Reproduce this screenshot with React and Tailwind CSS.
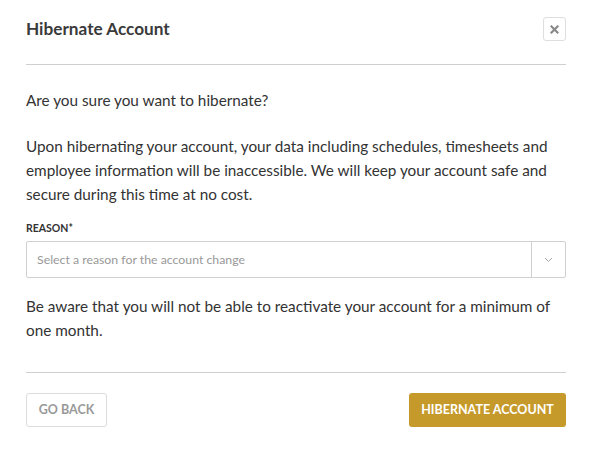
import React from 'react';

const ChevronDown = () => (
    <svg width="9" height="6" viewBox="0 0 9 6" fill="none">
        <path d="M1 1l3.5 3.5L8 1" stroke="#a8a8a8" strokeWidth="1" />
    </svg>
);

const CloseIcon = () => (
    <svg width="9" height="9" viewBox="0 0 9 9" fill="none">
        <path d="M1.5 1.5l6 6M7.5 1.5l-6 6" stroke="#8a8a8a" strokeWidth="2.2" strokeLinecap="square" />
    </svg>
);

const App = () => {
    return (
        <div className="w-[593px] h-[456px] bg-white pl-[26px] pr-[27px] text-[#333] font-['Lato','Liberation_Sans',sans-serif]">
            <div className="flex items-center justify-between pt-[17px] pb-[23px] border-b border-[#cfcfcf]">
                <h2 className="text-[17.2px] font-bold leading-[24px] text-[#3a3a3a]">Hibernate Account</h2>
                <button className="w-[23px] h-[24px] flex items-center justify-center border border-[#dedede] rounded-[3px] bg-white">
                    <CloseIcon />
                </button>
            </div>

            <div className="pt-[23px] text-[15.3px] leading-[24px]">
                <p>Are you sure you want to hibernate?</p>
                <p className="mt-[22px]">
                    Upon hibernating your account, your data including schedules, timesheets and employee information will be inaccessible. We will keep your account safe and secure during this time at no cost.
                </p>

                <label className="block mt-[14px] text-[10.5px] font-bold leading-[16px] text-[#333]">REASON*</label>
                <div className="mt-[5px] flex h-[37px] border border-[#d0d0d0] rounded-[2px]">
                    <div className="flex-1 flex items-center px-[10px] text-[12.3px] text-[#999]">
                        Select a reason for the account change
                    </div>
                    <div className="w-[34px] flex items-center justify-center border-l border-[#d0d0d0]">
                        <ChevronDown />
                    </div>
                </div>

                <p className="mt-[16px] pb-[30px] border-b border-[#cfcfcf]">
                    Be aware that you will not be able to reactivate your account for a minimum of one month.
                </p>
            </div>

            <div className="flex items-center justify-between pt-[20px]">
                <button className="h-[34px] w-[81px] border border-[#dcdcdc] rounded-[3px] text-[12.5px] font-bold text-[#999]">
                    GO BACK
                </button>
                <button className="h-[34px] w-[157px] rounded-[3px] bg-[#c69a2a] text-[12.5px] font-bold text-white">
                    HIBERNATE ACCOUNT
                </button>
            </div>
        </div>
    );
};

export default App;
